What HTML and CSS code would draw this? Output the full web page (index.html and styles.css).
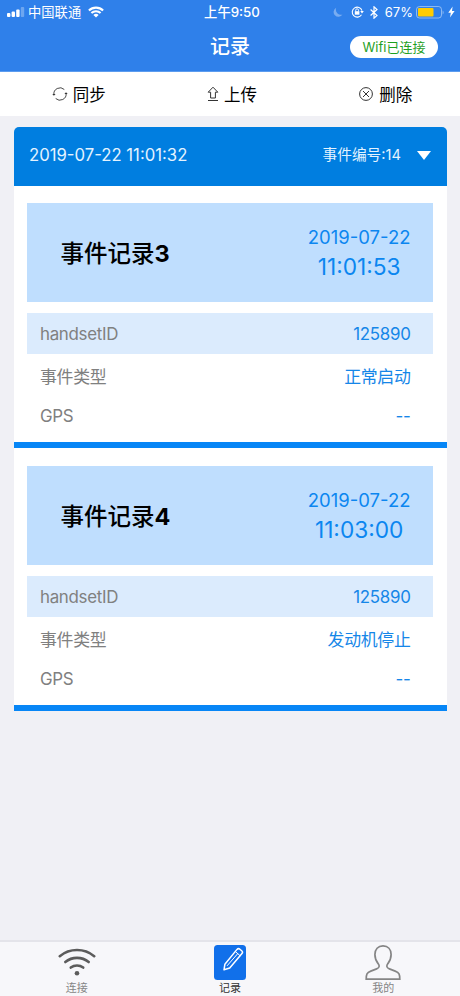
FILE: index.html
```html
<!DOCTYPE html>
<html lang="zh-CN">
  <head>
    <meta charset="UTF-8" />
    <meta name="viewport" content="width=device-width, initial-scale=1.0" />
    <title>记录</title>
    <link rel="stylesheet" href="styles.css">
  </head>
  <body>
    <header>
      <div class="status-bar">
        <div class="carrier">
          <svg class="signal" width="18" height="10" viewBox="0 0 18 10" fill="#fff">
            <rect x="0" y="6" width="3.4" height="4" rx="1" />
            <rect x="4.6" y="4.5" width="3.4" height="5.5" rx="1" />
            <rect x="9.2" y="2.5" width="3.4" height="7.5" rx="1" />
            <rect x="13.8" y="0" width="3.4" height="10" rx="1" opacity="0.3" />
          </svg>
          <span>中国联通</span>
          <svg class="wifi" width="16" height="12" viewBox="0 0 16 12" fill="none" stroke="#fff" stroke-width="2.1">
            <path d="M0.9 4.5a10.2 10.2 0 0 1 14.2 0" />
            <path d="M3.4 7.1a6.6 6.6 0 0 1 9.2 0" />
            <path d="M8 11.6L5.4 9a3.8 3.8 0 0 1 5.2 0z" fill="#fff" stroke="none" />
          </svg>
        </div>
        <div class="time">上午9:50</div>
        <div class="indicators">
          <svg width="10" height="11" viewBox="0 0 10 11" fill="#fff" opacity="0.35">
            <path d="M3.2 0.8A4.8 4.8 0 1 0 9.5 7.6A5.2 5.2 0 0 1 3.2 0.8z" />
          </svg>
          <svg class="lock" width="13" height="12" viewBox="0 0 13 12" fill="none" stroke="#fff" stroke-width="1.1">
            <path d="M10.5 8.8A5 5 0 1 1 11 4.6" />
            <path d="M9.2 5h3.6L11 7.4z" fill="#fff" stroke="none" />
            <rect x="3.8" y="5.2" width="4.6" height="3.5" fill="#fff" stroke="none" />
            <path d="M4.7 5.4V4.2a1.4 1.4 0 0 1 2.8 0v1.2" stroke-width="0.9" />
          </svg>
          <svg class="bluetooth" width="8" height="13" viewBox="0 0 8 13" fill="none" stroke="#fff" stroke-width="1.2">
            <path d="M0.6 3.5l6.4 6-3 2.7V0.8l3 2.7-6.4 6" />
          </svg>
          <span>67%</span>
          <svg class="battery" width="28" height="13" viewBox="0 0 28 13">
            <rect x="0.5" y="0.5" width="25" height="11.5" rx="3" fill="none" stroke="#fff" opacity="0.45" />
            <path d="M26.6 4.5v4q1-.7 1-2t-1-2z" fill="#fff" opacity="0.45" />
            <rect x="2" y="2" width="15.5" height="8.5" rx="1" fill="#fc0" />
          </svg>
          <svg class="bolt" width="7" height="12" viewBox="0 0 7 12" fill="#fff">
            <path d="M4.6 0.5L0.3 6.7h2.5L2 11.5l4.6-6.4H4z" />
          </svg>
        </div>
      </div>
      <div class="title-bar">
        <h1>记录</h1>
        <span class="wifi-state">Wifi已连接</span>
      </div>
    </header>

    <nav class="toolbar">
      <a>
        <svg width="16" height="16" viewBox="0 0 16 16" fill="none" stroke="#333" stroke-width="0.9">
          <path d="M1.9 8.8A6.2 6.2 0 0 1 12.3 3.5M14.1 7.2a6.2 6.2 0 0 1-10.4 5.3" />
          <path d="M0.3 8l1.6 1.8 1.7-1.8zM12.4 8l1.6-1.8 1.7 1.8z" fill="#333" stroke="none" />
        </svg>
        <span>同步</span>
      </a>
      <a>
        <svg width="12" height="16" viewBox="0 0 12 16" fill="none" stroke="#333">
          <path d="M6 1.2L1.2 6.2h2.4v5.8h4.8V6.2h2.4zM1 14.5h10" />
        </svg>
        <span>上传</span>
      </a>
      <a>
        <svg width="16" height="16" viewBox="0 0 16 16" fill="none" stroke="#333">
          <circle cx="8" cy="8" r="6.4" />
          <path d="M5 5l6 6M11 5l-6 6" />
        </svg>
        <span>删除</span>
      </a>
    </nav>

    <main>
      <div class="group-header">
        <span class="group-date">2019-07-22 11:01:32</span>
        <span class="group-number">事件编号:14</span>
        <span class="arrow"></span>
      </div>

      <section class="record">
        <div class="record-head">
          <h2>事件记录<b>3</b></h2>
          <div class="record-time">
            <div class="day">2019-07-22</div>
            <div class="clock">11:01:53</div>
          </div>
        </div>
        <div class="row shaded"><span>handsetID</span><b>125890</b></div>
        <div class="row"><span>事件类型</span><b>正常启动</b></div>
        <div class="row"><span>GPS</span><b>--</b></div>
      </section>

      <section class="record">
        <div class="record-head">
          <h2>事件记录<b>4</b></h2>
          <div class="record-time">
            <div class="day">2019-07-22</div>
            <div class="clock">11:03:00</div>
          </div>
        </div>
        <div class="row shaded"><span>handsetID</span><b>125890</b></div>
        <div class="row"><span>事件类型</span><b>发动机停止</b></div>
        <div class="row"><span>GPS</span><b>--</b></div>
      </section>
    </main>

    <footer>
      <a>
        <svg width="38" height="36" viewBox="0 0 38 36" fill="none" stroke="#5c5c5c" stroke-width="2.6" stroke-linecap="round">
          <path d="M1.8 11.2a27 27 0 0 1 34.4 0" />
          <path d="M7.3 17a18.5 18.5 0 0 1 23.4 0" />
          <path d="M12.8 22.6a10 10 0 0 1 12.4 0" />
          <circle cx="19" cy="28.3" r="2.3" fill="#5c5c5c" stroke="none" />
        </svg>
        <span>连接</span>
      </a>
      <a class="active">
        <svg width="32" height="36" viewBox="0 0 32 36" fill="none" stroke="#fff" stroke-width="1.5" stroke-linejoin="round">
          <rect x="0" y="0" width="32" height="35" rx="3.5" fill="#1170ea" stroke="none" />
          <path d="M10 24.8l.9-5.6L23 4.4q1.3-1.4 2.8-.2l1.9 1.6q1.5 1.3.3 2.8L15.7 23z" />
          <path d="M21.3 6.5l4.9 4.3M23.7 8.7L13 20.9" stroke-width="1" />
        </svg>
        <span>记录</span>
      </a>
      <a>
        <svg width="36" height="36" viewBox="0 0 36 36" fill="none" stroke="#858585" stroke-width="1.7">
          <path d="M1.2 34.2c0-5 .6-6.6 4.6-8.1l5.8-2.2c3-1.2 3.2-3 1.5-5.3-2.4-3-3.2-5.5-3.2-9C9.9 4.2 13 .9 18 .9s8.1 3.3 8.1 8.7c0 3.5-.8 6-3.2 9-1.7 2.3-1.5 4.1 1.5 5.3l5.8 2.2c4 1.5 4.6 3.1 4.6 8.1z" />
        </svg>
        <span>我的</span>
      </a>
    </footer>
  </body>
</html>
```

FILE: styles.css
```css
* {
  box-sizing: border-box;
}

body {
  margin: 0;
  height: 996px;
  display: flex;
  flex-direction: column;
  background-color: #f0f0f5;
  font-family: Inter, "Noto Sans CJK SC", sans-serif;
  color: #000;
}

svg {
  display: block;
  flex: none;
}

header {
  height: 72px;
  background-color: #2f80ea;
  border-bottom: 1px solid #5c9cef;
  color: #fff;
}

.status-bar {
  display: grid;
  grid-template-columns: 1fr auto 1fr;
  align-items: center;
  height: 24px;
  padding: 0 5px 0 7px;
  font-size: 13.3px;
  line-height: 24px;
}

.carrier,
.indicators {
  display: flex;
  align-items: center;
}

.signal {
  margin-right: 3px;
}

.wifi {
  margin-left: 7px;
}

.time {
  padding-left: 2px;
  font-weight: 500;
}

.indicators {
  justify-content: flex-end;
  font-size: 13px;
}

.lock {
  margin-left: 8px;
}

.bluetooth {
  margin: 0 7px 0 6px;
}

.battery {
  margin: 0 4px 0 3px;
}

.title-bar {
  display: grid;
  grid-template-columns: 1fr auto 1fr;
  align-items: center;
  height: 46px;
  padding-right: 22px;
  padding-left: 22px;
}

.title-bar h1 {
  grid-column: 2;
  margin: 0;
  padding-top: 1px;
  font-size: 20px;
  font-weight: 500;
  line-height: 29px;
}

.wifi-state {
  justify-self: end;
  width: 88px;
  height: 22px;
  border-radius: 11px;
  background-color: #fff;
  color: #1fa01f;
  font-size: 13px;
  line-height: 22px;
  text-align: center;
}

.toolbar {
  display: grid;
  grid-template-columns: repeat(3, 1fr);
  height: 44px;
  padding-bottom: 1px;
  background-color: #fff;
}

.toolbar a {
  display: flex;
  align-items: center;
  justify-content: center;
  gap: 5px;
  padding-left: 4px;
  font-size: 16.5px;
}

main {
  flex: 1;
  padding: 11px 13.5px 0;
}

.group-header {
  display: flex;
  align-items: center;
  height: 59px;
  padding: 0 15.5px 3px;
  border-radius: 5px 5px 0 0;
  background-color: #007ee0;
  color: #e4f3ff;
}

.group-date {
  flex: 1;
  font-size: 16.7px;
}

.group-number {
  font-size: 14.7px;
  line-height: 20px;
}

.arrow {
  margin-left: 16px;
  border: 7px solid transparent;
  border-top: 9.5px solid #fff;
  border-bottom: 0;
}

.record {
  height: 262px;
  padding: 17px 13.5px 0;
  border-bottom: 6px solid #0786f6;
  background-color: #fff;
}

.record + .record {
  height: 263px;
  padding-top: 18px;
}

.record-head {
  display: flex;
  align-items: center;
  justify-content: space-between;
  height: 99px;
  margin-bottom: 11px;
  padding: 0 22.5px 0 33.5px;
  background-color: #bfdefe;
}

.record-head h2 {
  margin: 0;
  padding-top: 2px;
  font-size: 23.5px;
  font-weight: 500;
  line-height: 34px;
}

.record-head h2 b {
  font-weight: 650;
}

.record-time {
  color: #0b86f0;
  text-align: center;
}

.day {
  font-size: 18.5px;
  line-height: 28px;
}

.clock {
  font-size: 22.7px;
  line-height: 32px;
}

.row {
  display: flex;
  align-items: center;
  justify-content: space-between;
  height: 41px;
  padding: 1px 22.5px 0 13px;
  color: #808080;
  font-size: 16.9px;
  letter-spacing: -0.3px;
}

.row b {
  color: #1586e8;
  font-weight: 400;
}

.shaded {
  background-color: #dbebfd;
}

footer {
  display: grid;
  grid-template-columns: repeat(3, 1fr);
  height: 56px;
  padding-top: 3px;
  border-top: 2px solid #e4e4ea;
  background-color: #f7f7fa;
}

footer a {
  display: flex;
  flex-direction: column;
  align-items: center;
  color: #858585;
  font-size: 11px;
  line-height: 15px;
}

footer .active {
  color: #333;
}
```
